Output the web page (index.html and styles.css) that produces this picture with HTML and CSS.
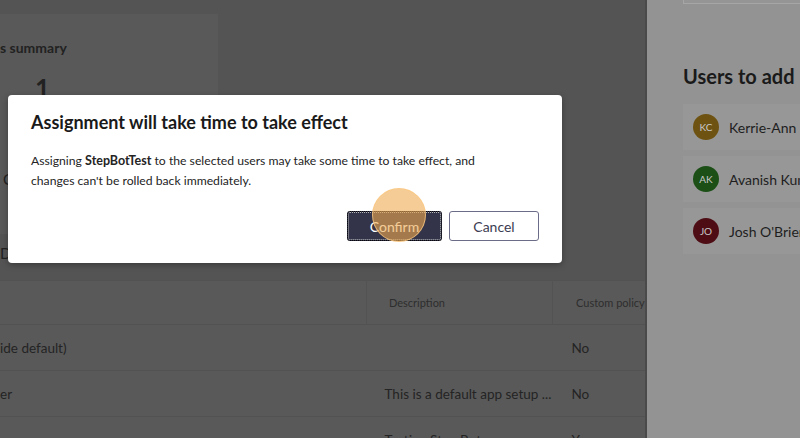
FILE: index.html
```html
<!DOCTYPE html>
<html lang="en">
<head>
    <meta charset="UTF-8">
    <title>Assign policy</title>
    <link rel="stylesheet" href="styles.css">
</head>
<body>
    <div class="page">
        <main class="main">
            <div class="summary-card">
                <div class="summary-title">s summary</div>
                <div class="summary-count">1</div>
                <div class="summary-letter">C</div>
            </div>
            <div class="filter-line">Dep     g                         ,  ,  @   g</div>
            <table class="policies">
                <tr class="head">
                    <td class="c-name"></td>
                    <td class="c-desc"><span>Description</span></td>
                    <td class="c-custom"><span>Custom policy</span></td>
                </tr>
                <tr>
                    <td class="c-name">ide default)</td>
                    <td class="c-desc"></td>
                    <td class="c-custom">No</td>
                </tr>
                <tr>
                    <td class="c-name">er</td>
                    <td class="c-desc">This is a default app setup ...</td>
                    <td class="c-custom">No</td>
                </tr>
                <tr>
                    <td class="c-name"></td>
                    <td class="c-desc">Testing Step Bot</td>
                    <td class="c-custom">Yes</td>
                </tr>
            </table>
        </main>
        <aside class="panel">
            <div class="search-box"></div>
            <h2 class="panel-title">Users to add</h2>
            <div class="user">
                <span class="avatar kc">KC</span>
                <span class="user-name">Kerrie-Ann Carter</span>
            </div>
            <div class="user">
                <span class="avatar ak">AK</span>
                <span class="user-name">Avanish Kumar</span>
            </div>
            <div class="user">
                <span class="avatar jo">JO</span>
                <span class="user-name">Josh O'Brien</span>
            </div>
        </aside>
    </div>

    <div class="dialog">
        <h3 class="dialog-title">Assignment will take time to take effect</h3>
        <p class="dialog-text">Assigning <b>StepBotTest</b> to the selected users may take some time to take effect, and changes can't be rolled back immediately.</p>
        <div class="dialog-actions">
            <button class="btn btn-primary">Confirm</button>
            <button class="btn btn-secondary">Cancel</button>
        </div>
        <div class="click-mark"></div>
    </div>
</body>
</html>
```

FILE: styles.css
```css
body {
    margin: 0;
    font-family: Lato, "Open Sans", sans-serif;
    background-color: #545454;
    color: #262626;
    overflow: hidden;
}
.page {
    display: flex;
    height: 438px;
}
.main {
    width: 645px;
    flex-shrink: 0;
    overflow: hidden;
}
.summary-card {
    margin-top: 14px;
    width: 218px;
    height: 220px;
    background-color: #595959;
}
.summary-title {
    padding-top: 25px;
    font-size: 14px;
    font-weight: 700;
    color: #222;
}
.summary-count {
    margin: 16px 0 0 35px;
    font-size: 26px;
    font-weight: 700;
    color: #222;
}
.summary-letter {
    margin: 66px 0 0 3px;
    font-size: 15px;
    color: #222;
}
.filter-line {
    margin-top: 10px;
    height: 36px;
    font-size: 15px;
    white-space: pre;
    color: #222;
}
.policies {
    width: 645px;
    table-layout: fixed;
    border-collapse: collapse;
    background-color: #595959;
    font-size: 13.5px;
    color: #242424;
    white-space: nowrap;
}
.policies tr {
    border-top: 1px solid #525252;
    height: 46px;
}
.policies tr.head {
    height: 44px;
    font-size: 11px;
    color: #2e2e2e;
}
.policies td {
    padding: 0;
    vertical-align: middle;
    overflow: hidden;
}
.c-name {
    width: 366px;
}
.c-desc {
    width: 167px;
    padding-left: 18px !important;
}
.c-custom {
    padding-left: 19px !important;
}
.head .c-desc, .head .c-custom {
    border-left: 1px solid #535353;
}
.head span {
    padding-left: 4px;
}
.panel {
    flex: 1;
    background-color: #939393;
    border-left: 2px solid #4a4a4a;
    padding-left: 36px;
    overflow: hidden;
}
.search-box {
    height: 3px;
    border: 1px solid #a6a6a6;
    border-top: none;
    background-color: #959595;
    margin-right: -20px;
}
.panel-title {
    margin: 60px 0 16px;
    font-size: 20px;
    font-weight: 700;
    color: #1a1a1a;
    white-space: nowrap;
}
.user {
    display: flex;
    align-items: center;
    gap: 10px;
    height: 46px;
    margin: 0 -20px 6px 0;
    padding-left: 10px;
    background-color: #979797;
    white-space: nowrap;
}
.avatar {
    width: 26px;
    height: 26px;
    border-radius: 50%;
    flex-shrink: 0;
    display: flex;
    align-items: center;
    justify-content: center;
    font-size: 10px;
    color: #c8c8c8;
}
.kc { background-color: #6e5212; }
.ak { background-color: #1b4f16; }
.jo { background-color: #4e0d14; }
.user-name {
    font-size: 14px;
    color: #1e1e1e;
}
.dialog {
    position: absolute;
    left: 8px;
    top: 95px;
    width: 554px;
    height: 168px;
    box-sizing: border-box;
    padding: 16px 23px;
    background-color: #fff;
    border-radius: 4px;
    box-shadow: 0 2px 6px rgba(0, 0, 0, 0.3);
}
.dialog-title {
    margin: 0;
    font-size: 18px;
    font-weight: 700;
    color: #1a1a1a;
}
.dialog-text {
    margin: 18px 0 0;
    max-width: 450px;
    font-size: 12.2px;
    line-height: 20px;
    color: #242424;
}
.dialog-text b {
    font-size: 12.5px;
}
.dialog-actions {
    display: flex;
    justify-content: flex-end;
    gap: 7px;
    margin-top: 20px;
}
.btn {
    height: 30px;
    font-family: inherit;
    font-size: 14px;
    border-radius: 3px;
}
.btn-primary {
    width: 95px;
    background-color: #33344a;
    color: #fff;
    border: 1px dotted #000;
    outline: 1px dotted #b8b8b8;
    outline-offset: -2px;
}
.btn-secondary {
    width: 90px;
    background-color: #fff;
    color: #3c3c52;
    border: 1px solid #6b6c88;
}
.click-mark {
    position: absolute;
    left: 364px;
    top: 93px;
    width: 52px;
    height: 52px;
    border-radius: 50%;
    background-color: rgba(240, 170, 80, 0.6);
    border: 1px solid rgba(250, 200, 130, 0.8);
}
```
